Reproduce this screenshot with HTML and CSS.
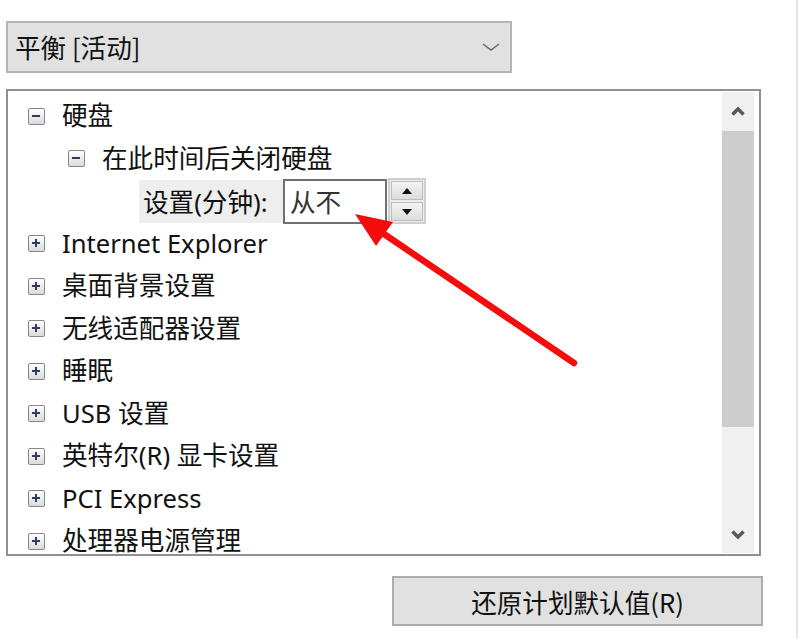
FILE: index.html
```html
<!DOCTYPE html>
<html lang="zh-CN">
<head>
<meta charset="utf-8">
<title>电源选项</title>
<link rel="stylesheet" href="styles.css">
</head>
<body>
<div class="page">
  <div class="dialog">
    <div class="combo">
      <span class="combo-text">平衡 [活动]</span>
      <svg class="combo-chev" width="18" height="8" viewBox="0 0 18 8"><path d="M1 1 L9 7 L17 1" fill="none" stroke="#666" stroke-width="1.4"/></svg>
    </div>

    <div class="tree">
      <div class="tree-body">
        <div class="row lvl0"><span class="exp minus"></span><span class="label">硬盘</span></div>
        <div class="row lvl1"><span class="exp minus"></span><span class="label">在此时间后关闭硬盘</span></div>
        <div class="row lvl2">
          <span class="set-label">设置(分钟):</span>
          <span class="input">从不</span>
          <span class="spin">
            <span class="spin-btn"><svg width="12" height="8" viewBox="0 0 12 8"><path d="M1 7 L6 1 L11 7 Z" fill="#111"/></svg></span>
            <span class="spin-btn"><svg width="12" height="8" viewBox="0 0 12 8"><path d="M1 1 L6 7 L11 1 Z" fill="#111"/></svg></span>
          </span>
        </div>
        <div class="row lvl0"><span class="exp plus"></span><span class="label">Internet Explorer</span></div>
        <div class="row lvl0"><span class="exp plus"></span><span class="label">桌面背景设置</span></div>
        <div class="row lvl0"><span class="exp plus"></span><span class="label">无线适配器设置</span></div>
        <div class="row lvl0"><span class="exp plus"></span><span class="label">睡眠</span></div>
        <div class="row lvl0"><span class="exp plus"></span><span class="label">USB 设置</span></div>
        <div class="row lvl0"><span class="exp plus"></span><span class="label">英特尔(R) 显卡设置</span></div>
        <div class="row lvl0"><span class="exp plus"></span><span class="label">PCI Express</span></div>
        <div class="row lvl0"><span class="exp plus"></span><span class="label">处理器电源管理</span></div>
      </div>
      <div class="scrollbar">
        <div class="sb-btn"><svg width="16" height="10" viewBox="0 0 16 10"><path d="M2.5 8.5 L8 3 L13.5 8.5" fill="none" stroke="#5a5a5a" stroke-width="3.6"/></svg></div>
        <div class="sb-track"><div class="sb-thumb"></div></div>
        <div class="sb-btn"><svg width="16" height="10" viewBox="0 0 16 10"><path d="M2.5 1.5 L8 7 L13.5 1.5" fill="none" stroke="#5a5a5a" stroke-width="3.6"/></svg></div>
      </div>
    </div>

    <div class="actions">
      <button class="btn" type="button">还原计划默认值(R)</button>
    </div>
  </div>

  <svg class="annot" width="800" height="639" viewBox="0 0 800 639">
    <line x1="574" y1="363" x2="384" y2="234" stroke="#f50d0d" stroke-width="6.5" stroke-linecap="round"/>
    <polygon points="355,214 393,222 376,246" fill="#f50d0d"/>
  </svg>
</div>
</body>
</html>
```

FILE: styles.css
```css
* { box-sizing: border-box; }

html, body {
  margin: 0;
  padding: 0;
  background: #ffffff;
}

body {
  font-family: "Segoe UI", "Noto Sans", "Noto Sans CJK SC", sans-serif;
  font-size: 25.6px;
  color: #111111;
}

.page {
  position: relative;
  width: 800px;
  height: 639px;
  overflow: hidden;
}

.page::after {
  content: "";
  position: absolute;
  top: 0;
  bottom: 0;
  left: 796px;
  width: 2px;
  background: #e6e6e6;
}

.dialog {
  padding: 21px 0 0 6px;
  width: 764px;
  display: flex;
  flex-direction: column;
}

.combo {
  width: 506px;
  height: 52px;
  background: #e1e1e1;
  border: 2px solid #b4b4b4;
  display: flex;
  align-items: center;
  justify-content: space-between;
  padding: 0 10px 0 7px;
}

.combo-text {
  line-height: 1;
  font-family: "Noto Sans CJK SC", sans-serif;
  font-size: 25.6px;
}

.tree {
  margin-top: 16px;
  width: 755px;
  height: 467px;
  border: 2px solid #8e9095;
  display: flex;
  padding: 1px 5px 1px 0;
  background: #fff;
}

.tree-body {
  flex: 1;
  overflow: hidden;
  padding-top: 3px;
}

.row {
  height: 42.5px;
  display: flex;
  align-items: center;
  white-space: nowrap;
}

.lvl0 { padding-left: 20px; }
.lvl1 { padding-left: 60px; }
.lvl2 { padding-left: 131px; }

.exp {
  position: relative;
  flex: none;
  width: 17px;
  height: 17px;
  border: 1.5px solid #878787;
  border-radius: 2px;
  background: linear-gradient(#ffffff, #dadada);
  margin-right: 17px;
}

.exp::before {
  content: "";
  position: absolute;
  left: 3px;
  top: 6px;
  width: 8px;
  height: 2px;
  background: #2f3b60;
}

.exp.plus::after {
  content: "";
  position: absolute;
  left: 6px;
  top: 3px;
  width: 2px;
  height: 8px;
  background: #2f3b60;
}

.label {
  line-height: 1;
}

.set-label {
  height: 43px;
  width: 144px;
  background: #eeeeee;
  display: flex;
  align-items: center;
  padding-left: 4px;
}

.input {
  height: 45px;
  width: 104px;
  border: 2px solid #707070;
  background: #fff;
  display: flex;
  align-items: center;
  padding-left: 5px;
  color: #333;
}

.spin {
  margin-left: 1px;
  height: 46px;
  width: 38px;
  border: 2px solid #cfcfcf;
  background: #ececec;
  display: flex;
  flex-direction: column;
  gap: 2px;
  padding: 1px;
}

.spin-btn {
  flex: 1;
  border: 1.5px solid #bdbdbd;
  background: linear-gradient(#f4f4f4, #dcdcdc);
  display: flex;
  align-items: center;
  justify-content: center;
}

.scrollbar {
  width: 32px;
  background: #f0f0f0;
  display: flex;
  flex-direction: column;
}

.sb-btn {
  height: 37px;
  display: flex;
  align-items: center;
  justify-content: center;
  flex: none;
}

.sb-track {
  flex: 1;
  padding-top: 2px;
}

.sb-thumb {
  height: 296px;
  background: #cdcdcd;
}

.actions {
  margin-top: 20px;
  display: flex;
  justify-content: flex-end;
  width: 757px;
}

.btn {
  width: 371px;
  height: 50px;
  background: #e1e1e1;
  border: 2px solid #adadad;
  font-family: "Noto Sans CJK SC", sans-serif;
  font-size: 25.6px;
  color: #111111;
  padding: 0;
}

.annot {
  position: absolute;
  left: 0;
  top: 0;
  pointer-events: none;
}
```
